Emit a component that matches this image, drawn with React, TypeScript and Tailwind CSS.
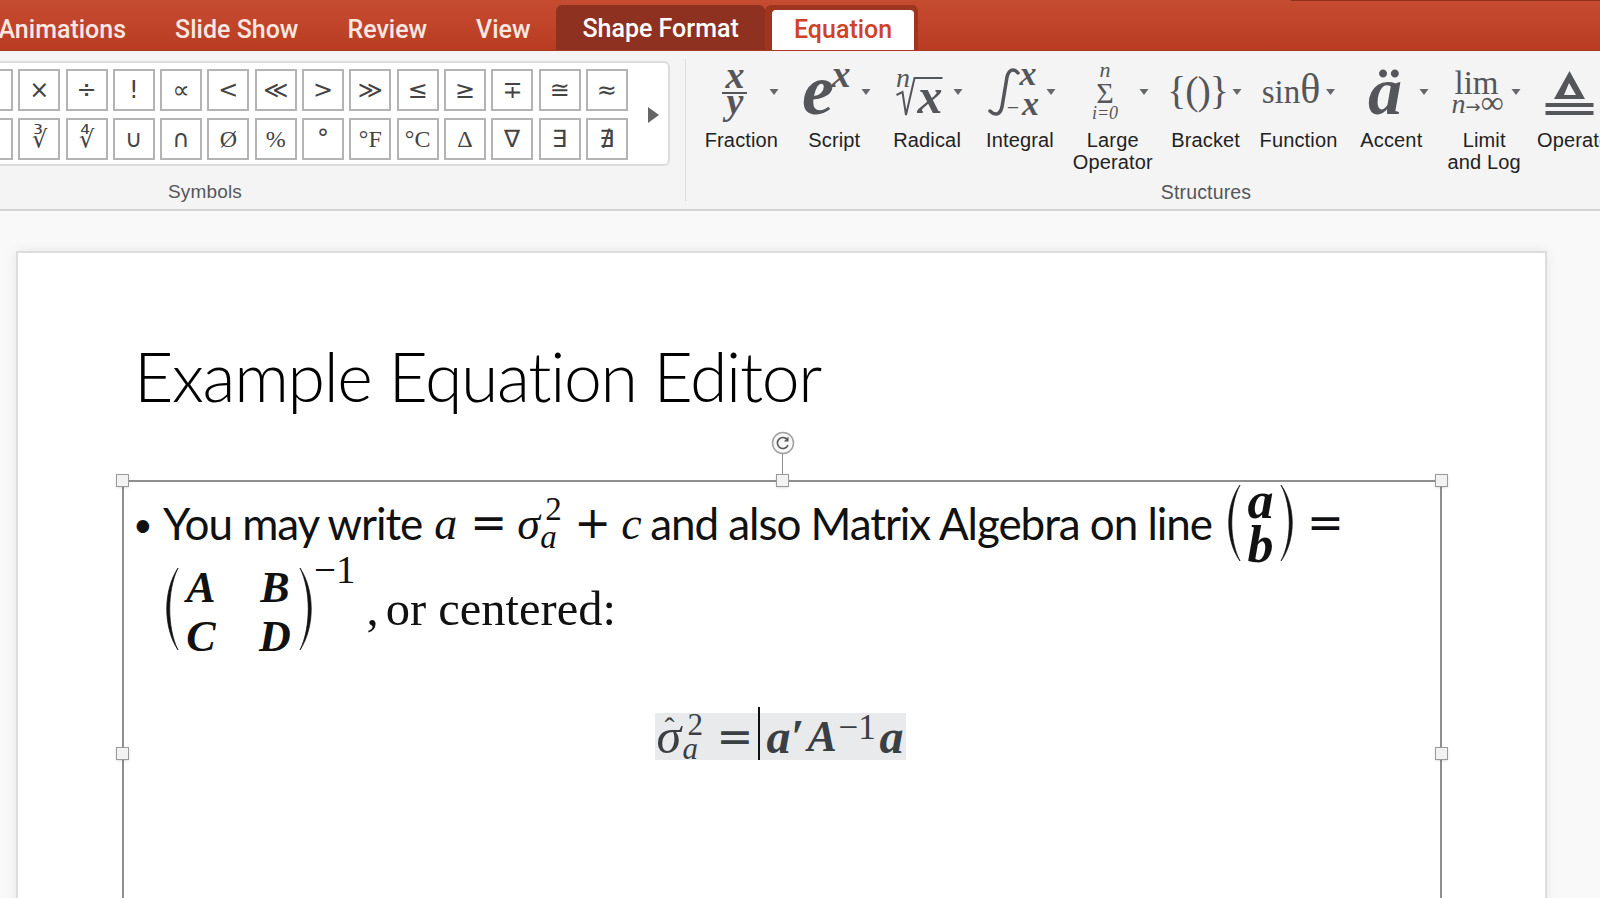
import type { ReactNode } from 'react';

const SERIF = { fontFamily: '"Liberation Serif", serif' };
const OPS = { fontFamily: '"DejaVu Sans", sans-serif' };
const INK = '#55565a';

const symbolsTop = ['', '×', '÷', '!', '∝', '<', '≪', '>', '≫', '≤', '≥', '∓', '≅', '≈'];
const symbolsBottom = ['', '∛', '∜', '∪', '∩', 'Ø', '%', '°', '°F', '°C', 'Δ', '∇', '∃', '∄'];
const serifSymbols = ['∛', '∜', 'Ø', '%', '°F', '°C', 'Δ', '∇'];

function Caret({ x }: { x: number }) {
  return <path d={`M${x - 4.5} 28h9l-4.5 6z`} fill="#66676b" />;
}

function Glyph({ x, y, size, bold = true, italic = true, spacing = 0, children }: { x: number; y: number; size: number; bold?: boolean; italic?: boolean; spacing?: number; children: ReactNode }) {
  return (
    <text
      x={x}
      y={y}
      fontSize={size}
      textAnchor="middle"
      fill={INK}
      letterSpacing={spacing}
      fontFamily="Liberation Serif, serif"
      fontWeight={bold ? 700 : 400}
      fontStyle={italic ? 'italic' : 'normal'}
    >
      {children}
    </text>
  );
}

const structures: { label: ReactNode; icon: ReactNode }[] = [
  {
    label: 'Fraction',
    icon: (
      <>
        <Glyph x={40} y={27} size={38}>x</Glyph>
        <rect x={27} y={31} width={25} height={2} fill={INK} />
        <Glyph x={40} y={53} size={38}>y</Glyph>
        <Caret x={79} />
      </>
    ),
  },
  {
    label: 'Script',
    icon: (
      <>
        <Glyph x={30} y={53} size={72}>e</Glyph>
        <Glyph x={53} y={26} size={38}>x</Glyph>
        <Caret x={78} />
      </>
    ),
  },
  {
    label: 'Radical',
    icon: (
      <>
        <Glyph x={22} y={26} size={28} bold={false}>n</Glyph>
        <path d="M15.5 34l6-3 3.5 23 8.5-37h28" fill="none" stroke={INK} strokeWidth={2} />
        <Glyph x={49} y={52} size={50}>x</Glyph>
        <Caret x={77} />
      </>
    ),
  },
  {
    label: 'Integral',
    icon: (
      <>
        <path d="M45 12C41 7 36 8 34 16L29 46C27 54 22 55 17 50" fill="none" stroke={INK} strokeWidth={3.5} strokeLinecap="round" />
        <Glyph x={55} y={24} size={34}>x</Glyph>
        <Glyph x={40} y={54} size={22} bold={false} italic={false}>−</Glyph>
        <Glyph x={57.5} y={54} size={34}>x</Glyph>
        <Caret x={78} />
      </>
    ),
  },
  {
    label: (
      <>
        Large
        <br />
        Operator
      </>
    ),
    icon: (
      <>
        <Glyph x={39} y={16} size={22} bold={false}>n</Glyph>
        <Glyph x={39} y={42} size={30} bold={false} italic={false}>Σ</Glyph>
        <Glyph x={39} y={58} size={18} bold={false}>i=0</Glyph>
        <Caret x={78} />
      </>
    ),
  },
  {
    label: 'Bracket',
    icon: (
      <>
        <Glyph x={38.5} y={43} size={40} bold={false} italic={false} spacing={-1}>{'{()}'}</Glyph>
        <Caret x={78} />
      </>
    ),
  },
  {
    label: 'Function',
    icon: (
      <>
        <Glyph x={39} y={42} size={33} bold={false} italic={false}>
          sin<tspan fontSize={42}>θ</tspan>
        </Glyph>
        <Caret x={78.5} />
      </>
    ),
  },
  {
    label: 'Accent',
    icon: (
      <>
        <Glyph x={40} y={53} size={68}>ä</Glyph>
        <Caret x={79} />
      </>
    ),
  },
  {
    label: (
      <>
        Limit
        <br />
        and Log
      </>
    ),
    icon: (
      <>
        <Glyph x={38.5} y={33} size={33} bold={false} italic={false}>lim</Glyph>
        <Glyph x={39.5} y={52} size={28} bold={false}>
          n<tspan fontSize={18} fontStyle="normal" fontFamily="DejaVu Sans, sans-serif">→</tspan><tspan fontSize={32} fontStyle="normal">∞</tspan>
        </Glyph>
        <Caret x={78} />
      </>
    ),
  },
  {
    label: 'Operator',
    icon: (
      <>
        <path d="M38.5 10L54 38H23zM38 22L33 34h12z" fill={INK} fillRule="evenodd" />
        <rect x={14.5} y={42} width={48} height={4} fill={INK} />
        <rect x={14.5} y={50} width={48} height={4} fill={INK} />
      </>
    ),
  },
];

function Paren({ h, flip = false }: { h: number; flip?: boolean }) {
  return (
    <svg width={20} height={h} viewBox={`0 0 20 ${h}`} className={flip ? 'shrink-0 -scale-x-100' : 'shrink-0'}>
      <path d={`M18 1C3 ${h * 0.28} 3 ${h * 0.72} 18 ${h - 1}C7 ${h * 0.72} 7 ${h * 0.28} 18 1z`} fill="#111" stroke="#111" strokeWidth={0.7} />
    </svg>
  );
}

function Handle({ className }: { className: string }) {
  return <div className={`absolute w-[13px] h-[13px] bg-[#f2f2f2] border border-[#9a9a9a] shadow-sm ${className}`} />;
}

function Scripts({ sup, sub, size, gap }: { sup: string; sub: string; size: number; gap: number }) {
  return (
    <span className="flex flex-col leading-none" style={{ fontSize: size }}>
      <span className="pl-[5px]" style={{ lineHeight: `${gap}px` }}>{sup}</span>
      <span className="italic" style={{ lineHeight: `${gap}px` }}>{sub}</span>
    </span>
  );
}

export default function App() {
  return (
    <div className="w-[1600px] h-[898px] overflow-hidden flex flex-col bg-[#f9f9f9] font-['Liberation_Sans',sans-serif]">
      {/* Tabs */}
      <div className="relative h-[51px] shrink-0 flex items-end bg-gradient-to-b from-[#c64c31] to-[#b93c22] border-b border-[#a93a22] text-[25px] font-['Roboto',sans-serif] font-medium text-[#f8e7e1]">
        <div className="absolute right-0 top-0 w-[309px] h-px bg-[#8f3120]" />
        <div className="flex h-[41px] items-center -ml-[26px]">
          <span className="px-[24.5px]">Animations</span>
          <span className="px-[24.5px]">Slide Show</span>
          <span className="px-[24.5px]">Review</span>
          <span className="px-[24.5px]">View</span>
        </div>
        <div className="ml-[1px] h-[45px] w-[209px] pt-[3px] flex items-center justify-center rounded-t-md bg-[#8f3120] text-white">
          Shape Format
        </div>
        <div className="h-[45px] w-[153px] pl-[7px] pr-[4px] pt-[5px] rounded-t-md bg-[#9d3521]">
          <div className="h-full rounded-t-sm bg-white text-[#cf4226] flex items-center justify-center">Equation</div>
        </div>
      </div>

      {/* Ribbon */}
      <div className="h-[160px] shrink-0 flex overflow-hidden bg-[#f4f4f4] border-b-2 border-[#d4d4d4] text-[20px] tracking-[0.15px] text-[#222]">
        <div className="w-[685px] shrink-0 pt-[10px] overflow-hidden">
          <div className="-ml-[40px] w-[710px] h-[105px] pl-[9px] pt-[6px] flex items-start bg-white border-2 border-[#dcdcdc] rounded-md">
            <div className="grid grid-cols-[repeat(14,42px)] gap-x-[5.3px] gap-y-[7px] text-[24px] text-[#444] font-['DejaVu_Sans',sans-serif]">
              {[...symbolsTop, ...symbolsBottom].map((s, i) => (
                <div
                  key={i}
                  className="h-[42px] flex items-center justify-center bg-white border-2 border-[#b4b4b4] overflow-hidden whitespace-nowrap"
                  style={serifSymbols.includes(s) ? SERIF : undefined}
                >
                  {s}
                </div>
              ))}
            </div>
            <svg width={14} height={18} viewBox="0 0 14 18" className="ml-[19px] mt-[37px]">
              <path d="M1 1l11 8-11 8z" fill="#666" />
            </svg>
          </div>
          <div className="w-[410px] mt-[15px] text-center text-[19px] text-[#55565a] leading-[22px]">Symbols</div>
        </div>
        <div className="shrink-0 w-px h-[142px] mt-[8px] bg-[#dedede]" />
        <div className="grow min-w-0 pl-[9px] pt-[10px] overflow-hidden">
          <div className="flex h-[121px]">
            {structures.map((item, i) => (
              <div key={i} className="w-[92.85px] shrink-0 flex flex-col items-center text-center leading-[21.5px]">
                <svg width={93} height={62} viewBox="0 0 93 62" className="shrink-0 overflow-visible mb-[7px]">
                  {item.icon}
                </svg>
                <div className="whitespace-nowrap">{item.label}</div>
              </div>
            ))}
          </div>
          <div className="w-[1022px] -mt-[1px] text-center text-[19.5px] text-[#55565a] leading-[22px]">Structures</div>
        </div>
      </div>

      {/* Slide canvas */}
      <div className="grow min-h-0 pt-[40px] pl-[16px] overflow-hidden">
        <div className="w-[1531px] h-[800px] bg-white border-2 border-[#dddddd] shadow-[0_0_12px_rgba(0,0,0,0.08)]">
          <h1 className="pl-[116px] pt-[78px] h-[173px] text-[68px] leading-[90px] font-['Lato',sans-serif] font-light text-black tracking-[-0.02em] whitespace-nowrap">
            Example Equation Editor
          </h1>
          <div className="relative ml-[104px] mt-[54px] w-[1320px] h-[560px] border-2 border-[#8f8f8f]">
            <Handle className="-left-[8px] -top-[8px]" />
            <Handle className="left-[652px] -top-[8px]" />
            <Handle className="-right-[8px] -top-[8px]" />
            <Handle className="-left-[8px] top-[265px]" />
            <Handle className="-right-[8px] top-[265px]" />
            <div className="absolute left-[658px] -top-[30px] w-px h-[22px] bg-[#8f8f8f]" />
            <svg width={24} height={24} viewBox="0 0 24 24" className="absolute left-[647px] -top-[51px]">
              <circle cx={12} cy={12} r={10.5} fill="#f7f7f7" stroke="#a0a0a0" strokeWidth={1.5} />
              <path d="M16.5 9a5.5 5.5 0 1 0 .5 5" fill="none" stroke="#555" strokeWidth={1.6} />
              <path d="M17.5 5.5v5h-4.5z" fill="#555" />
            </svg>

            {/* Line one */}
            <div className="flex items-center h-[82px] pl-[9px] text-[44px] text-[#111] font-['Lato',sans-serif] tracking-[-0.024em] whitespace-nowrap">
              <span className="w-[30px] text-[34px]">•</span>
              <span>You may write</span>
              <span className="ml-[12px] flex items-center text-[46px] tracking-normal" style={SERIF}>
                <i className="w-[36px]">a</i>
                <span className="w-[47px] text-[44px]" style={OPS}>=</span>
                <i className="w-[23px]">σ</i>
                <span className="w-[34px]"><Scripts sup="2" sub="a" size={33} gap={28} /></span>
                <span className="w-[47px] text-[44px]" style={OPS}>+</span>
                <i className="w-[29px]">c</i>
              </span>
              <span>and also Matrix Algebra on line</span>
              <span className="ml-[10px] flex items-center font-bold italic text-[52px] tracking-normal" style={SERIF}>
                <Paren h={78} />
                <span className="flex flex-col items-center leading-[44px] w-[37px]">
                  <span>a</span>
                  <span>b</span>
                </span>
                <Paren h={78} flip />
              </span>
              <span className="ml-[8px] text-[44px] tracking-normal" style={OPS}>=</span>
            </div>

            {/* Line two */}
            <div className="flex items-center h-[88px] mt-[1px] pl-[36px] text-[48.5px] text-[#111] whitespace-nowrap" style={SERIF}>
              <Paren h={84} />
              <span className="grid grid-cols-[46px_46px] gap-x-[28px] -ml-[2px] pt-[6px] leading-[49px] text-[44px] font-bold italic text-center">
                <span>A</span>
                <span>B</span>
                <span>C</span>
                <span>D</span>
              </span>
              <Paren h={84} flip />
              <span className="self-start -ml-[4px] text-[39px] leading-[28px] -mt-[9px]">−1</span>
              <span className="ml-[11px] -mr-[5px]">,</span>
              <span>&nbsp;or centered:</span>
            </div>

            {/* Centered equation */}
            <div className="flex justify-center mt-[60px] -ml-[4px]">
              <div className="relative flex items-center h-[47px] w-[251px] pl-[2px] bg-[#e8eaec] text-[#3a3f44] whitespace-nowrap" style={SERIF}>
                <span className="relative w-[26px] text-[50px] italic">
                  σ
                  <span className="absolute left-[8px] top-[6px] text-[30px] not-italic">ˆ</span>
                </span>
                <span className="w-[34px]"><Scripts sup="2" sub="a" size={31} gap={24} /></span>
                <span className="w-[43px] text-[44px]" style={OPS}>=</span>
                <span className="absolute left-[103px] -top-[6px] w-[2px] h-[53px] bg-[#111]" />
                <span className="ml-[7px] w-[41px] text-[48px] font-bold italic">a′</span>
                <span className="w-[31px] text-[44px] font-bold italic">A</span>
                <span className="self-start w-[41px] text-[35px] leading-[30px]">−1</span>
                <span className="text-[48px] font-bold italic">a</span>
              </div>
            </div>
          </div>
        </div>
      </div>
    </div>
  );
}
